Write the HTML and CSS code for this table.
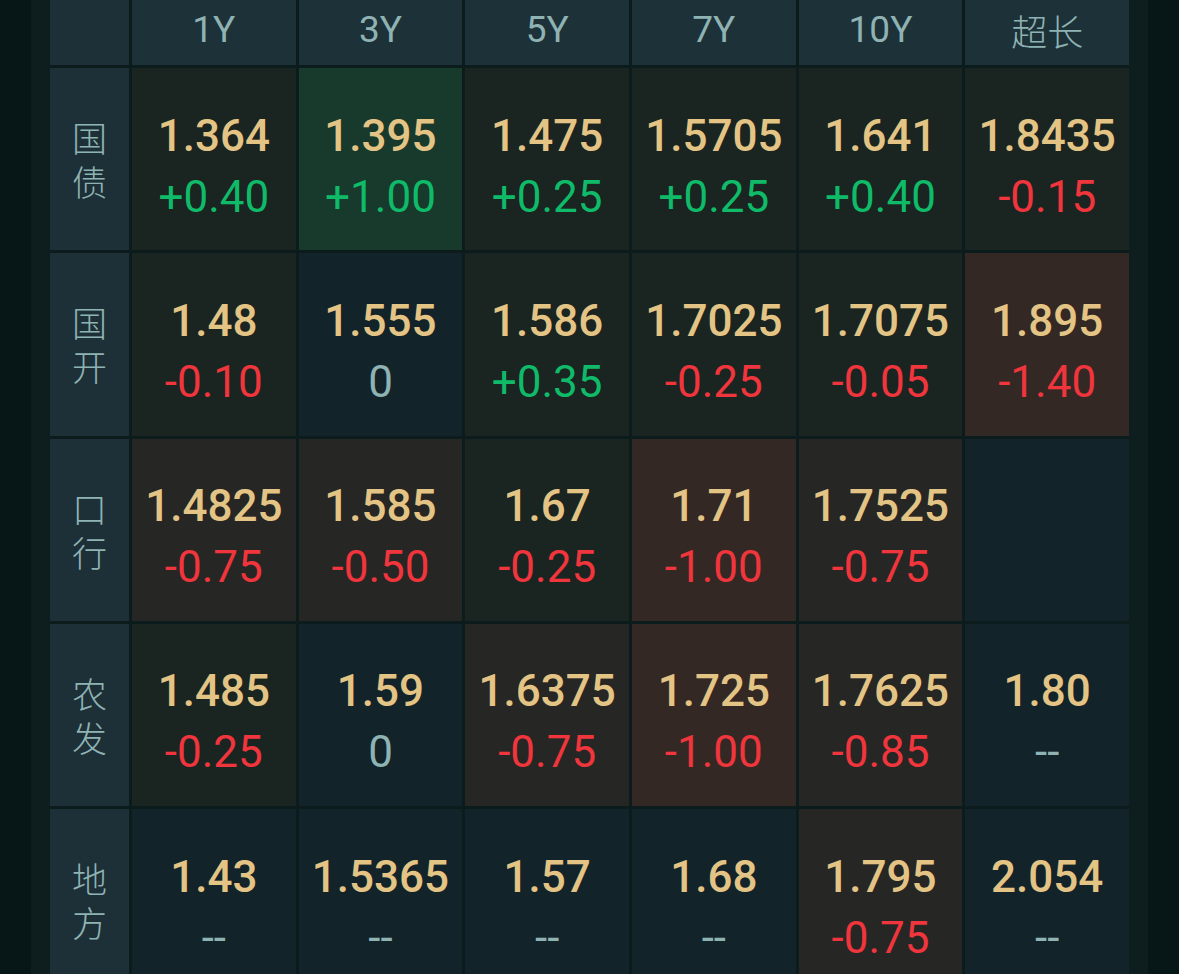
FILE: index.html
```html
<!DOCTYPE html>
<html lang="zh">
<head>
<meta charset="utf-8">
<title>收益率</title>
<link rel="stylesheet" href="styles.css">
</head>
<body>
<div class="panel">
  <div class="grid">
    <div class="corner"></div>
    <div class="head">1Y</div>
    <div class="head">3Y</div>
    <div class="head">5Y</div>
    <div class="head">7Y</div>
    <div class="head">10Y</div>
    <div class="head cjk">超长</div>

    <div class="label"><span>国</span><span>债</span></div>
    <div class="cell"><div class="val">1.364</div><div class="chg up">+0.40</div></div>
    <div class="cell bg-up"><div class="val">1.395</div><div class="chg up">+1.00</div></div>
    <div class="cell"><div class="val">1.475</div><div class="chg up">+0.25</div></div>
    <div class="cell"><div class="val">1.5705</div><div class="chg up">+0.25</div></div>
    <div class="cell"><div class="val">1.641</div><div class="chg up">+0.40</div></div>
    <div class="cell"><div class="val">1.8435</div><div class="chg down">-0.15</div></div>

    <div class="label"><span>国</span><span>开</span></div>
    <div class="cell"><div class="val">1.48</div><div class="chg down">-0.10</div></div>
    <div class="cell bg-flat"><div class="val">1.555</div><div class="chg flat">0</div></div>
    <div class="cell"><div class="val">1.586</div><div class="chg up">+0.35</div></div>
    <div class="cell"><div class="val">1.7025</div><div class="chg down">-0.25</div></div>
    <div class="cell"><div class="val">1.7075</div><div class="chg down">-0.05</div></div>
    <div class="cell bg-down2"><div class="val">1.895</div><div class="chg down">-1.40</div></div>

    <div class="label"><span>口</span><span>行</span></div>
    <div class="cell bg-down1"><div class="val">1.4825</div><div class="chg down">-0.75</div></div>
    <div class="cell bg-down1"><div class="val">1.585</div><div class="chg down">-0.50</div></div>
    <div class="cell"><div class="val">1.67</div><div class="chg down">-0.25</div></div>
    <div class="cell bg-down2"><div class="val">1.71</div><div class="chg down">-1.00</div></div>
    <div class="cell bg-down1"><div class="val">1.7525</div><div class="chg down">-0.75</div></div>
    <div class="cell bg-flat"></div>

    <div class="label"><span>农</span><span>发</span></div>
    <div class="cell"><div class="val">1.485</div><div class="chg down">-0.25</div></div>
    <div class="cell bg-flat"><div class="val">1.59</div><div class="chg flat">0</div></div>
    <div class="cell bg-down1"><div class="val">1.6375</div><div class="chg down">-0.75</div></div>
    <div class="cell bg-down2"><div class="val">1.725</div><div class="chg down">-1.00</div></div>
    <div class="cell bg-down1"><div class="val">1.7625</div><div class="chg down">-0.85</div></div>
    <div class="cell bg-flat"><div class="val">1.80</div><div class="chg flat">--</div></div>

    <div class="label"><span>地</span><span>方</span></div>
    <div class="cell bg-flat"><div class="val">1.43</div><div class="chg flat">--</div></div>
    <div class="cell bg-flat"><div class="val">1.5365</div><div class="chg flat">--</div></div>
    <div class="cell bg-flat"><div class="val">1.57</div><div class="chg flat">--</div></div>
    <div class="cell bg-flat"><div class="val">1.68</div><div class="chg flat">--</div></div>
    <div class="cell bg-down1"><div class="val">1.795</div><div class="chg down">-0.75</div></div>
    <div class="cell bg-flat"><div class="val">2.054</div><div class="chg flat">--</div></div>
  </div>
</div>
</body>
</html>
```

FILE: styles.css
```css
html, body {
  margin: 0;
  padding: 0;
  height: 100%;
}
body {
  background: #071616;
  overflow: hidden;
  font-family: Roboto, "Noto Sans CJK SC", sans-serif;
}
.panel {
  margin-left: 31px;
  width: 1117px;
  box-sizing: border-box;
  padding: 0 19px;
  min-height: 100%;
  background: #0e1d1d;
}
.grid {
  display: grid;
  grid-template-columns: 79px repeat(6, 1fr);
  grid-template-rows: 65px;
  grid-auto-rows: 182.25px;
  gap: 3px;
  background: #0c1c1c;
}
.corner {
  background: #1d3038;
}
.head {
  background: #1d3139;
  color: #8fb3b3;
  font-size: 37px;
  display: flex;
  align-items: center;
  justify-content: center;
  padding-bottom: 6px;
}
.head.cjk {
  font-family: "Noto Sans CJK SC", sans-serif;
  font-weight: 300;
  font-size: 36px;
}
.label {
  background: #1d3038;
  color: #8fb3b3;
  font-family: "Noto Sans CJK SC", sans-serif;
  font-weight: 300;
  font-size: 35px;
  line-height: 44px;
  display: flex;
  flex-direction: column;
  align-items: center;
  justify-content: center;
}
.label span {
  display: block;
  height: 44px;
}
.cell {
  background: #1a2421;
  display: flex;
  flex-direction: column;
  align-items: center;
  justify-content: center;
  padding-top: 15px;
  box-sizing: border-box;
  font-size: 44px;
  line-height: 61px;
}
.val {
  color: #e3c484;
  font-weight: 500;
}
.chg {
  font-weight: 400;
}
.chg.up { color: #0fba68; }
.chg.down { color: #f0353d; }
.chg.flat { color: #8fb3b3; }
.bg-up { background: #173a2c; }
.bg-flat { background: #12232a; }
.bg-down1 { background: #262624; }
.bg-down2 { background: #342824; }
```
